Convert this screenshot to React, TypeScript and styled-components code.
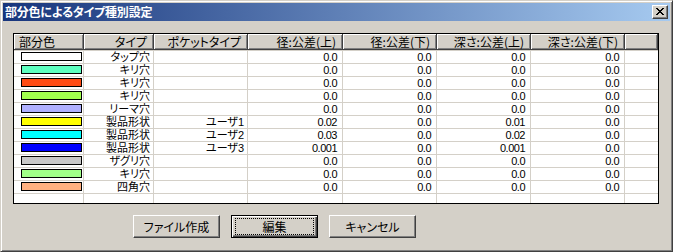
import styled, { createGlobalStyle } from 'styled-components';

const FACE = '#d4d0c8';
const GRID = '#d4d0c8';
const UI_FONT = `"Noto Sans CJK JP", "Liberation Sans", sans-serif`;
const CELL_FONT = `"Liberation Sans", "Noto Sans CJK JP", sans-serif`;

const columns = [70, 70, 94, 95, 94, 94, 94, 33];

const headers = ['部分色', 'タイプ', 'ポケットタイプ', '径:公差(上)', '径:公差(下)', '深さ:公差(上)', '深さ:公差(下)', ''];

interface IRow {
  color: string;
  type: string;
  pocket?: string;
  values?: string[];
}

const ZERO = ['0.0', '0.0', '0.0', '0.0'];

const rows: IRow[] = [
  { color: '#ffffff', type: 'タップ穴' },
  { color: '#5effc0', type: 'キリ穴' },
  { color: '#ff4b14', type: 'キリ穴' },
  { color: '#a2ff4e', type: 'キリ穴' },
  { color: '#b0b0ff', type: 'リーマ穴' },
  { color: '#ffff00', type: '製品形状', pocket: 'ユーザ1', values: ['0.02', '0.0', '0.01', '0.0'] },
  { color: '#00ffff', type: '製品形状', pocket: 'ユーザ2', values: ['0.03', '0.0', '0.02', '0.0'] },
  { color: '#0000ff', type: '製品形状', pocket: 'ユーザ3', values: ['0.001', '0.0', '0.001', '0.0'] },
  { color: '#c8c8c8', type: 'ザグリ穴' },
  { color: '#a0ff88', type: 'キリ穴' },
  { color: '#ffb080', type: '四角穴' },
];

const CloseGlyph = () => (
  <svg width="8" height="7" viewBox="0 0 8 7" shapeRendering="crispEdges">
    <path
      fill="#000"
      d="M0 0h2v1H0zM6 0h2v1H6zM1 1h2v1H1zM5 1h2v1H5zM2 2h4v1H2zM3 3h2v1H3zM2 4h4v1H2zM1 5h2v1H1zM5 5h2v1H5zM0 6h2v1H0zM6 6h2v1H6z"
    />
  </svg>
);

const App = () => {
  return (
    <>
      <GlobalStyle />
      <Window>
        <TitleBar>
          <TitleText>部分色によるタイプ種別設定</TitleText>
          <CloseButton>
            <CloseGlyph />
          </CloseButton>
        </TitleBar>
        <Body>
          <ListBox>
            <HeaderRow>
              {headers.map((h, i) => (
                <HeaderCell key={i} $left={i === 0}>
                  {h}
                </HeaderCell>
              ))}
            </HeaderRow>
            <Rows>
              {rows.map((r, i) => {
                const values = r.values || ZERO;
                return (
                  <Row key={i}>
                    <Cell>
                      <Swatch $color={r.color} />
                    </Cell>
                    <Cell>{r.type}</Cell>
                    <Cell>{r.pocket || ''}</Cell>
                    {values.map((v, j) => (
                      <NumCell key={j}>{v}</NumCell>
                    ))}
                    <Cell $last />
                  </Row>
                );
              })}
              <FillerRow>
                {columns.map((_, i) => (
                  <Cell key={i} $last={i === columns.length - 1} />
                ))}
              </FillerRow>
            </Rows>
          </ListBox>
          <ButtonBar>
            <Button>ファイル作成</Button>
            <Button $default>
              <FocusRing>編集</FocusRing>
            </Button>
            <Button>キャンセル</Button>
          </ButtonBar>
        </Body>
      </Window>
    </>
  );
};

export default App;

const GlobalStyle = createGlobalStyle`
  html, body {
    margin: 0;
    padding: 0;
    background: ${FACE};
  }
  body {
    font-family: ${UI_FONT};
    font-size: 12px;
    font-feature-settings: "palt";
  }
`;

const Window = styled.div`
  box-sizing: border-box;
  width: 673px;
  height: 252px;
  background: ${FACE};
  border: 1px solid;
  border-color: ${FACE} #404040 #404040 ${FACE};
  box-shadow: inset 1px 1px #ffffff, inset -1px -1px #808080;
  padding: 2px;
  display: flex;
  flex-direction: column;
`;

const TitleBar = styled.div`
  height: 18px;
  display: flex;
  align-items: center;
  justify-content: space-between;
  padding: 0 2px 0 2px;
  background: linear-gradient(to right, #17357c, #a6caf0);
`;

const TitleText = styled.span`
  color: #ffffff;
  font-weight: bold;
  font-size: 12px;
  line-height: 18px;
  letter-spacing: -0.2px;
  white-space: nowrap;
`;

const CloseButton = styled.div`
  box-sizing: border-box;
  width: 16px;
  height: 14px;
  background: ${FACE};
  border: 1px solid;
  border-color: #ffffff #404040 #404040 #ffffff;
  box-shadow: inset -1px -1px #808080;
  display: flex;
  align-items: center;
  justify-content: center;
  padding: 0 1px 1px 0;
`;

const Body = styled.div`
  flex: 1;
  display: flex;
  flex-direction: column;
  padding: 12px 0 0 10px;
`;

const ListBox = styled.div`
  box-sizing: border-box;
  width: 646px;
  height: 171px;
  border: 1px solid #000000;
  background: #ffffff;
  display: flex;
  flex-direction: column;
  overflow: hidden;
`;

const gridCols = columns.map((w) => `${w}px`).join(' ');

const HeaderRow = styled.div`
  display: grid;
  grid-template-columns: ${gridCols};
  height: 16px;
`;

const HeaderCell = styled.div<{ $left?: boolean }>`
  box-sizing: border-box;
  height: 16px;
  background: ${FACE};
  border-right: 1px solid #404040;
  border-bottom: 1px solid #404040;
  box-shadow: inset 1px 1px #ffffff, inset -1px -1px #808080;
  font-size: 12px;
  line-height: 15px;
  color: #000000;
  white-space: nowrap;
  text-align: ${({ $left }) => ($left ? 'left' : 'right')};
  padding: ${({ $left }) => ($left ? '0 0 0 5px' : '0 6px 0 0')};
`;

const Rows = styled.div`
  flex: 1;
  display: flex;
  flex-direction: column;
  border-top: 1px solid ${GRID};
`;

const Row = styled.div`
  display: grid;
  grid-template-columns: ${gridCols};
  height: 13px;
  box-sizing: border-box;
  border-bottom: 1px solid ${GRID};
`;

const FillerRow = styled.div`
  flex: 1;
  display: grid;
  grid-template-columns: ${gridCols};
`;

const Cell = styled.div<{ $last?: boolean }>`
  box-sizing: border-box;
  border-right: ${({ $last }) => ($last ? 'none' : `1px solid ${GRID}`)};
  font-family: ${CELL_FONT};
  font-size: 11px;
  line-height: 12px;
  color: #000000;
  text-align: right;
  padding-right: 3px;
  white-space: nowrap;
`;

const NumCell = styled(Cell)`
  letter-spacing: -0.5px;
  padding-right: 5px;
`;

const Swatch = styled.div<{ $color: string }>`
  box-sizing: border-box;
  width: 61px;
  height: 9px;
  margin: 1px 0 0 7px;
  border: 1px solid #000000;
  background: ${({ $color }) => $color};
`;

const ButtonBar = styled.div`
  display: flex;
  gap: 11px;
  padding: 11px 0 0 120px;
`;

const Button = styled.div<{ $default?: boolean }>`
  box-sizing: border-box;
  width: 87px;
  height: 23px;
  background: ${FACE};
  border: 1px solid;
  border-color: #ffffff #404040 #404040 #ffffff;
  box-shadow: inset -1px -1px #808080;
  display: flex;
  align-items: center;
  justify-content: center;
  font-size: 12px;
  color: #000000;
  padding: ${({ $default }) => ($default ? '2px' : '0 0 1px 0')};
  ${({ $default }) =>
    $default &&
    `
    border: 1px solid #000000;
    box-shadow: inset 1px 1px #ffffff, inset -1px -1px #404040, inset -2px -2px #808080;
  `}
`;

const FocusRing = styled.div`
  box-sizing: border-box;
  width: 100%;
  height: 100%;
  margin: 1px;
  border: 1px dotted #000000;
  display: flex;
  align-items: center;
  justify-content: center;
`;
